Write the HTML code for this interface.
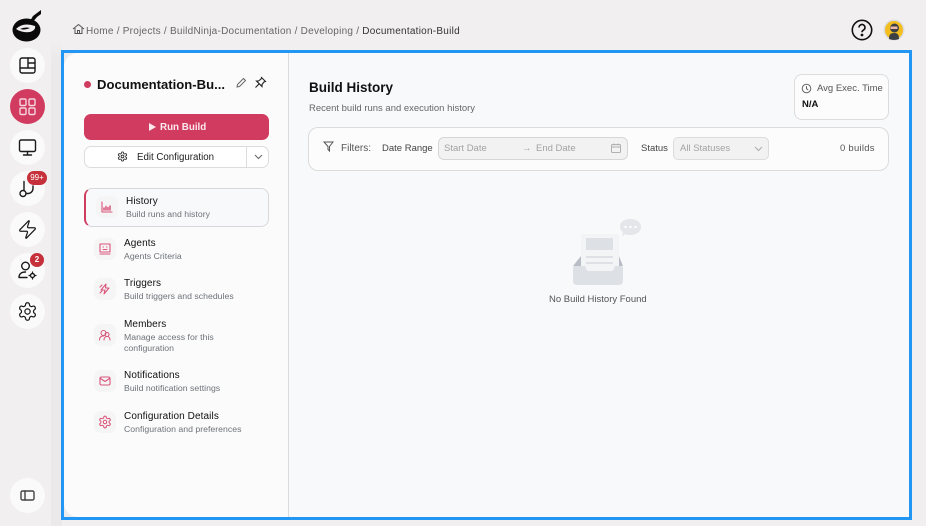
<!DOCTYPE html>
<html><head><meta charset="utf-8"><style>
*{box-sizing:border-box;margin:0;padding:0}
html,body{width:926px;height:526px;overflow:hidden;background:#f1eff0;font-family:"Liberation Sans",sans-serif;color:#111}
.a{position:absolute;white-space:nowrap}
.side{position:absolute;left:0;top:0;width:51px;height:526px;background:#f1eff0}
.strip{position:absolute;left:51px;top:0;width:11px;height:526px;background:linear-gradient(#f1eff0,#f1eff0 40px,#ebe9ea 60px)}
.c{position:absolute;left:10px;width:35px;height:35px;border-radius:50%;background:#fafafa}
.c svg{position:absolute;left:7px;top:7px;width:21px;height:21px;fill:none;stroke:#1a1a1a;stroke-width:1.4;stroke-linecap:round;stroke-linejoin:round}
.frame{position:absolute;left:61px;top:50px;width:851px;height:470px;border:3px solid #2196f3;background:#ececec}
.lp{position:absolute;left:64px;top:53px;width:225px;height:464px;background:#fbfbfb;border-radius:14px 0 0 14px;border-right:1px solid #dcdcdc}
.rp{position:absolute;left:289px;top:53px;width:620px;height:464px;background:#f8f9fb}
.ic{position:absolute;left:94px;width:22px;height:22px;border-radius:7px;background:#f6f5f6}
.ic svg{position:absolute;left:4px;top:4px;width:14px;height:14px;fill:none;stroke:#d9557a;stroke-width:1.1;stroke-linecap:round;stroke-linejoin:round}
.t{font-size:10px;color:#111;line-height:12px;letter-spacing:.1px}
.s{font-size:8.7px;color:#6d7278;line-height:11px;letter-spacing:.02px}
</style></head><body>
<div class="side"></div><div class="strip"></div>

<svg class="a" style="left:11px;top:8px" width="32" height="36" viewBox="0 0 32 36"><path d="M22 8 L30 2 L30 6 L26 9 L21 15 L19 13 Z" fill="#0a0a0a"/><ellipse cx="15.500" cy="22" rx="14" ry="11.500" fill="#0a0a0a"/><path d="M5 21 Q12 14 24 18 Q25 22 19 24 Q11 25 5 21Z" fill="#f1eff0"/><path d="M9 21 Q14 18.500 19 20 Q14 22.500 9 21Z" fill="#0a0a0a"/></svg>

<div class="c" style="top:48px"><svg viewBox="0 0 21 21"><rect x="3" y="3" width="15" height="15" rx="2"/><path d="M3 13h15M11 3v10M11 8h7"/></svg></div>
<div class="c" style="top:89px;background:#d13b60"><svg viewBox="0 0 21 21" style="stroke:#f6d5de"><rect x="3" y="3" width="6" height="6.500" rx="1.200"/><rect x="12" y="3" width="6" height="6.500" rx="1.200"/><rect x="3" y="12" width="6" height="6.500" rx="1.200"/><rect x="12" y="12" width="6" height="6.500" rx="1.200"/></svg></div>
<div class="c" style="top:130px"><svg viewBox="0 0 21 21"><rect x="2.500" y="3" width="16" height="11.500" rx="1.500"/><path d="M10.500 14.500v3.500M6.500 18h8"/></svg></div>
<div class="c" style="top:171px"><svg viewBox="0 0 21 21"><circle cx="6" cy="15.500" r="3"/><path d="M7 12.500V3.500M9 15.500h2a5 5 0 0 0 5-5V8"/></svg></div>
<div class="a" style="left:27px;top:171px;width:20px;height:14px;border-radius:7px;background:#c5303a;color:#fff;font-size:8px;line-height:14px;text-align:center">99+</div>
<div class="c" style="top:212px"><svg viewBox="0 0 24 24"><path d="M4 14a1 1 0 0 1-.78-1.630l9.900-10.200a.5.5 0 0 1 .86.46l-1.920 6.020A1 1 0 0 0 13 10h7a1 1 0 0 1 .78 1.630l-9.900 10.200a.5.5 0 0 1-.86-.46l1.920-6.020A1 1 0 0 0 11 14z"/></svg></div>
<div class="c" style="top:253px"><svg viewBox="0 0 21 21"><circle cx="8.500" cy="6" r="3.800"/><path d="M2 17.500c0-3.500 2.500-5.500 6.500-5.500M2 17.500h8"/><circle cx="15.500" cy="15.500" r="2"/><path d="M15.500 12v1.300M15.500 17.700V19M12 15.500h1.300M17.700 15.500H19" stroke-width="1.200"/></svg></div>
<div class="a" style="left:30px;top:253px;width:14px;height:14px;border-radius:50%;background:#c5303a;color:#fff;font-size:8px;font-weight:700;line-height:14px;text-align:center">2</div>
<div class="c" style="top:294px"><svg viewBox="0 0 24 24"><path d="M12.220 2h-.44a2 2 0 0 0-2 2v.18a2 2 0 0 1-1 1.730l-.43.25a2 2 0 0 1-2 0l-.15-.08a2 2 0 0 0-2.730.73l-.22.38a2 2 0 0 0 .73 2.730l.15.1a2 2 0 0 1 1 1.720v.51a2 2 0 0 1-1 1.740l-.15.09a2 2 0 0 0-.73 2.730l.22.38a2 2 0 0 0 2.730.73l.15-.08a2 2 0 0 1 2 0l.43.25a2 2 0 0 1 1 1.730V20a2 2 0 0 0 2 2h.44a2 2 0 0 0 2-2v-.18a2 2 0 0 1 1-1.730l.43-.25a2 2 0 0 1 2 0l.15.08a2 2 0 0 0 2.730-.73l.22-.39a2 2 0 0 0-.73-2.730l-.15-.08a2 2 0 0 1-1-1.740v-.5a2 2 0 0 1 1-1.740l.15-.09a2 2 0 0 0 .73-2.730l-.22-.38a2 2 0 0 0-2.730-.73l-.15.08a2 2 0 0 1-2 0l-.43-.25a2 2 0 0 1-1-1.730V4a2 2 0 0 0-2-2z"/><circle cx="12" cy="12" r="3"/></svg></div>
<div class="c" style="top:478px"><svg viewBox="0 0 21 21" style="stroke:#444"><rect x="4" y="6" width="13" height="9" rx="1.500"/><path d="M8 6v9"/></svg></div>

<svg class="a" style="left:72px;top:23px" width="13" height="12" viewBox="0 0 13 12" fill="none" stroke="#555" stroke-width="1"><path d="M1 6 6.500 1.500 12 6M3 5v5.500h7V5M5.500 10.500V7.500h2v3"/></svg>
<div class="a" style="left:86px;top:26px;font-size:10px;line-height:12px;color:#666;letter-spacing:.25px">Home / Projects / BuildNinja-Documentation / Developing / <span style="color:#333">Documentation-Build</span></div>

<svg class="a" style="left:851px;top:19px" width="22" height="22" viewBox="0 0 22 22" fill="none" stroke="#111" stroke-width="1.600"><circle cx="11" cy="11" r="9.700"/><path d="M8 8.500a3 3 0 1 1 4.500 2.600c-1 .6-1.500 1-1.500 2.200"/><circle cx="11" cy="16" r=".6" fill="#111"/></svg>
<svg class="a" style="left:883px;top:19px" width="22" height="22" viewBox="0 0 22 22"><circle cx="11" cy="11" r="10.500" fill="#dcdcdc"/><circle cx="11" cy="11" r="9" fill="#f3bd1e"/><path d="M6 20c0-4 1-6 5-6s5 2 5 6q-5 2-10 0Z" fill="#3c4044"/><circle cx="11.500" cy="9" r="4.500" fill="#3c4044"/><rect x="7.500" y="7.500" width="7" height="2.500" fill="#eeb9a8"/></svg>

<div class="frame"></div>
<div class="lp"></div><div class="rp"></div>

<div class="a" style="left:84px;top:81px;width:7px;height:7px;border-radius:50%;background:#d13b60"></div>
<div class="a" style="left:97px;top:76px;font-size:13.100px;line-height:17px;font-weight:700;color:#111">Documentation-Bu...</div>
<svg class="a" style="left:235px;top:77px" width="12" height="12" viewBox="0 0 12 12" fill="none" stroke="#666" stroke-width="1"><path d="M2 10 2.500 7.500 8.500 1.500 10.500 3.500 4.500 9.500Z"/></svg>
<svg class="a" style="left:254px;top:76px" width="13" height="13" viewBox="0 0 13 13" fill="none" stroke="#222" stroke-width="1.100"><path d="M7.500 1.500 11.500 5.500 10 6 8 8.500 8 10.500 2.500 5 4.500 5 7 3Z M5 8 1.500 11.500"/></svg>

<div class="a" style="left:84px;top:114px;width:185px;height:26px;border-radius:7px;background:#d13b60"></div>
<svg class="a" style="left:149px;top:123px" width="7" height="8"><path d="M0 0 7 4 0 8Z" fill="#fbe9ee"/></svg>
<div class="a" style="left:160px;top:122px;font-size:9.800px;line-height:12px;font-weight:700;color:#fbe9ee">Run Build</div>

<div class="a" style="left:84px;top:146px;width:185px;height:22px;border-radius:7px;border:1px solid #dcdcdc;background:#fff"></div>
<div class="a" style="left:246px;top:146px;width:1px;height:22px;background:#dcdcdc"></div>
<svg class="a" style="left:117px;top:151px" width="11" height="11" viewBox="0 0 24 24" fill="none" stroke="#333" stroke-width="2"><path d="M12.220 2h-.44a2 2 0 0 0-2 2v.18a2 2 0 0 1-1 1.730l-.43.25a2 2 0 0 1-2 0l-.15-.08a2 2 0 0 0-2.730.73l-.22.38a2 2 0 0 0 .73 2.730l.15.1a2 2 0 0 1 1 1.720v.51a2 2 0 0 1-1 1.740l-.15.09a2 2 0 0 0-.73 2.730l.22.38a2 2 0 0 0 2.730.73l.15-.08a2 2 0 0 1 2 0l.43.25a2 2 0 0 1 1 1.730V20a2 2 0 0 0 2 2h.44a2 2 0 0 0 2-2v-.18a2 2 0 0 1 1-1.730l.43-.25a2 2 0 0 1 2 0l.15.08a2 2 0 0 0 2.730-.73l.22-.39a2 2 0 0 0-.73-2.730l-.15-.08a2 2 0 0 1-1-1.740v-.5a2 2 0 0 1 1-1.740l.15-.09a2 2 0 0 0 .73-2.730l-.22-.38a2 2 0 0 0-2.730-.73l-.15.08a2 2 0 0 1-2 0l-.43-.25a2 2 0 0 1-1-1.730V4a2 2 0 0 0-2-2z"/><circle cx="12" cy="12" r="3"/></svg>
<div class="a" style="left:137px;top:152px;font-size:9.700px;line-height:12px;color:#222">Edit Configuration</div>
<svg class="a" style="left:254px;top:154px" width="9" height="6" fill="none" stroke="#666"><path d="M1 1 4.500 4.500 8 1"/></svg>

<div class="a" style="left:84px;top:188px;width:185px;height:39px;border-radius:8px;background:#f8f9fb;border:1px solid #d8d8dc;border-left:2px solid #d13b60"></div>
<div class="ic" style="left:96px;top:196px"><svg viewBox="0 0 14 14"><path d="M2 2v10h10"/><path d="M4 10V8M6 10V6.500M8 10V7.500M10 10V6" stroke-width="1.500"/></svg></div>
<div class="a t" style="left:126px;top:196px">History</div>
<div class="a s" style="left:126px;top:209px">Build runs and history</div>

<div class="ic" style="top:238px"><svg viewBox="0 0 14 14"><rect x="2" y="2" width="10" height="8"/><path d="M5 5h.5M8.500 5H9M5 7.500h4M2 12h10"/></svg></div>
<div class="a t" style="left:124px;top:238px">Agents</div>
<div class="a s" style="left:124px;top:251px">Agents Criteria</div>

<div class="ic" style="top:278px"><svg viewBox="0 0 14 14"><path d="M8 2 3 8h4l-1 4 5-6H7.500Z"/><path d="M2 5l2-2M2 11l2-2"/></svg></div>
<div class="a t" style="left:124px;top:278px">Triggers</div>
<div class="a s" style="left:124px;top:291px">Build triggers and schedules</div>

<div class="ic" style="top:324px"><svg viewBox="0 0 14 14"><circle cx="5.500" cy="5" r="2.500"/><circle cx="9" cy="6.500" r="2"/><path d="M1.500 12c0-2.500 1.500-4 4-4M6 12c0-2 1.200-3.500 3-3.500s3 1.500 3 3.500"/></svg></div>
<div class="a t" style="left:124px;top:319px">Members</div>
<div class="a s" style="left:124px;top:332px;line-height:10.500px">Manage access for this<br>configuration</div>

<div class="ic" style="top:370px"><svg viewBox="0 0 14 14"><rect x="2" y="3" width="10" height="8" rx="1.500"/><path d="M2.500 4.500 7 7.500l4.500-3"/></svg></div>
<div class="a t" style="left:124px;top:370px">Notifications</div>
<div class="a s" style="left:124px;top:383px">Build notification settings</div>

<div class="ic" style="top:411px"><svg viewBox="0 0 24 24" style="stroke-width:1.800"><path d="M12.220 2h-.44a2 2 0 0 0-2 2v.18a2 2 0 0 1-1 1.730l-.43.25a2 2 0 0 1-2 0l-.15-.08a2 2 0 0 0-2.730.73l-.22.38a2 2 0 0 0 .73 2.730l.15.1a2 2 0 0 1 1 1.720v.51a2 2 0 0 1-1 1.740l-.15.09a2 2 0 0 0-.73 2.730l.22.38a2 2 0 0 0 2.730.73l.15-.08a2 2 0 0 1 2 0l.43.25a2 2 0 0 1 1 1.730V20a2 2 0 0 0 2 2h.44a2 2 0 0 0 2-2v-.18a2 2 0 0 1 1-1.730l.43-.25a2 2 0 0 1 2 0l.15.08a2 2 0 0 0 2.730-.73l.22-.39a2 2 0 0 0-.73-2.730l-.15-.08a2 2 0 0 1-1-1.740v-.5a2 2 0 0 1 1-1.740l.15-.09a2 2 0 0 0 .73-2.730l-.22-.38a2 2 0 0 0-2.730-.73l-.15.08a2 2 0 0 1-2 0l-.43-.25a2 2 0 0 1-1-1.730V4a2 2 0 0 0-2-2z"/><circle cx="12" cy="12" r="3"/></svg></div>
<div class="a t" style="left:124px;top:411px">Configuration Details</div>
<div class="a s" style="left:124px;top:424px">Configuration and preferences</div>

<div class="a" style="left:309px;top:79px;font-size:13.500px;line-height:17px;font-weight:700;color:#111">Build History</div>
<div class="a s" style="left:309px;top:103px;font-size:9.450px;color:#666">Recent build runs and execution history</div>

<div class="a" style="left:794px;top:74px;width:95px;height:46px;border:1px solid #dcdcdc;border-radius:8px;background:#fcfcfd"></div>
<svg class="a" style="left:801px;top:83px" width="11" height="11" viewBox="0 0 11 11" fill="none" stroke="#666"><circle cx="5.500" cy="5.500" r="4.300"/><path d="M5.500 3v2.700l1.700 1.300"/></svg>
<div class="a" style="left:817px;top:83px;font-size:9.500px;line-height:11px;color:#555">Avg Exec. Time</div>
<div class="a" style="left:802px;top:99px;font-size:9.500px;line-height:12px;font-weight:700;color:#111">N/A</div>

<div class="a" style="left:308px;top:127px;width:581px;height:44px;border:1px solid #dcdcdc;border-radius:10px;background:#fcfcfd"></div>
<svg class="a" style="left:323px;top:141px" width="11" height="11" viewBox="0 0 11 11" fill="none" stroke="#555"><path d="M1 1h9L6.500 5.500V10L5 8.500V5.500Z"/></svg>
<div class="a" style="left:341px;top:143px;font-size:10px;line-height:12px;color:#555">Filters:</div>
<div class="a" style="left:382px;top:143px;font-size:9.500px;line-height:12px;color:#444">Date Range</div>
<div class="a" style="left:438px;top:137px;width:190px;height:23px;border:1px solid #d6d6d6;border-radius:6px;background:#f2f2f2"></div>
<div class="a" style="left:444px;top:143px;font-size:9.500px;line-height:12px;color:#a2a2a2">Start Date</div>
<div class="a" style="left:522px;top:143px;font-size:9.500px;line-height:12px;color:#a2a2a2">→</div>
<div class="a" style="left:536px;top:143px;font-size:9.500px;line-height:12px;color:#a2a2a2">End Date</div>
<svg class="a" style="left:611px;top:143px" width="10" height="10" viewBox="0 0 10 10" fill="none" stroke="#b0b0b0"><rect x=".5" y="1.500" width="9" height="8" rx="1"/><path d="M.5 4h9M3 .5v2M7 .5v2"/></svg>
<div class="a" style="left:641px;top:143px;font-size:9.500px;line-height:12px;color:#444">Status</div>
<div class="a" style="left:673px;top:137px;width:96px;height:23px;border:1px solid #dcdcdc;border-radius:5px;background:#f2f2f2"></div>
<div class="a" style="left:680px;top:143px;font-size:9.500px;line-height:12px;color:#a2a2a2">All Statuses</div>
<svg class="a" style="left:754px;top:146px" width="9" height="6" fill="none" stroke="#aaa"><path d="M1 1 4.500 4.500 8 1"/></svg>
<div class="a" style="left:840px;top:143px;font-size:9.500px;line-height:12px;color:#555;letter-spacing:.25px">0 builds</div>

<svg class="a" style="left:570px;top:216px" width="74" height="72" viewBox="0 0 74 72">
<path d="M3 50 11 40V50Z" fill="#b9bec6"/><path d="M53 50 49 40V50Z" fill="#b9bec6"/>
<rect x="11" y="18" width="38" height="40" fill="#f3f4f6"/>
<rect x="16" y="22" width="27" height="12" fill="#dde0e5"/>
<rect x="16" y="40" width="27" height="2" fill="#dde0e5"/><rect x="16" y="46" width="27" height="2" fill="#dde0e5"/>
<path d="M3 52 Q3 50 5 50H15L16 53Q17 55 19 55H41Q43 55 44 53L45 50H51Q53 50 53 52V65Q53 69 49 69H7Q3 69 3 65Z" fill="#dde0e5"/>
<path d="M60 3C66 3 71 6 71 11S66 19 60 19C58 19 57 19 55 18L52 21 53 16C51 15 50 13 50 11 50 6 54 3 60 3Z" fill="#e4e6ea"/>
<circle cx="55.500" cy="11" r="1.200" fill="#fff"/><circle cx="60.500" cy="11" r="1.200" fill="#fff"/><circle cx="65.500" cy="11" r="1.200" fill="#fff"/>
</svg>
<div class="a" style="left:549px;top:294px;font-size:9.500px;line-height:12px;color:#555">No Build History Found</div>
</body></html>
